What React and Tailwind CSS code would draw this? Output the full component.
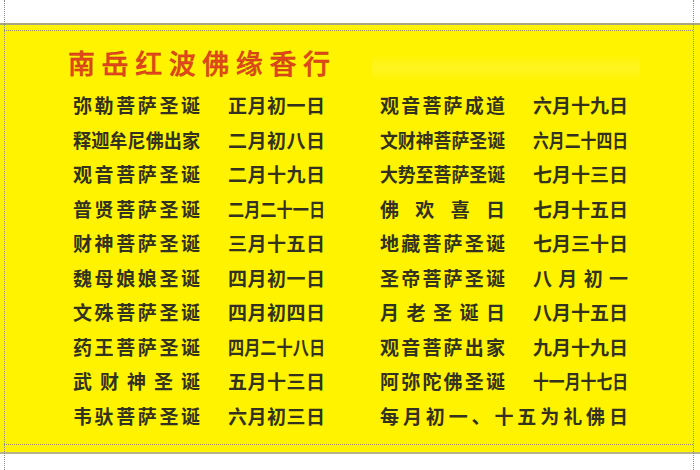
const rows = [
  ["弥勒菩萨圣诞", "正月初一日", "观音菩萨成道", "六月十九日"],
  ["释迦牟尼佛出家", "二月初八日", "文财神菩萨圣诞", "六月二十四日"],
  ["观音菩萨圣诞", "二月十九日", "大势至菩萨圣诞", "七月十三日"],
  ["普贤菩萨圣诞", "二月二十一日", "佛欢喜日", "七月十五日"],
  ["财神菩萨圣诞", "三月十五日", "地藏菩萨圣诞", "七月三十日"],
  ["魏母娘娘圣诞", "四月初一日", "圣帝菩萨圣诞", "八月初一"],
  ["文殊菩萨圣诞", "四月初四日", "月老圣诞日", "八月十五日"],
  ["药王菩萨圣诞", "四月二十八日", "观音菩萨出家", "九月十九日"],
  ["武财神圣诞", "五月十三日", "阿弥陀佛圣诞", "十一月十七日"],
  ["韦驮菩萨圣诞", "六月初三日", "每月初一、十五为礼佛日", null],
];

const FONT = 19;

// spreads the characters over a fixed width, squeezing them when they don't fit
function Spread({ text, width, className = "" }) {
  const chars = Array.from(text);
  const natural = chars.length * FONT;
  const squeeze = natural > width;
  return (
    <div className={`shrink-0 ${className}`} style={{ width }}>
      <div
        className="flex justify-between origin-left"
        style={
          squeeze
            ? { width: natural, transform: `scaleX(${width / natural})` }
            : { width }
        }
      >
        {chars.map((ch, i) => (
          <span key={i}>{ch}</span>
        ))}
      </div>
    </div>
  );
}

export default function App() {
  return (
    <div className="relative w-[700px] h-[470px] overflow-hidden bg-white font-['Noto_Sans_CJK_SC',sans-serif]">
      <div className="h-[23px]" />

      {/* Yellow card */}
      <div className="h-[431px] bg-[#fff300] border-t-2 border-b-2 border-t-[#a8a67a] border-b-[#b7b48c]">
        {/* Title */}
        <div className="flex items-start h-[30px] mt-[23px]">
          <div className="ml-[68px] w-[262px] flex justify-between text-[27px] leading-[30px] font-medium text-[#e5461c] [-webkit-text-stroke:0.4px_#b53814]">
            {Array.from("南岳红波佛缘香行").map((ch, i) => (
              <span key={i}>{ch}</span>
            ))}
          </div>
          <div className="ml-[42px] mt-[7px] w-[268px] h-[25px] rounded-sm bg-gradient-to-b from-[#fff300] via-[#fff41e] to-[#fff300]" />
        </div>

        {/* Rows */}
        <div className="mt-[10px] text-[19px] leading-[24px] font-semibold text-[#33311f]">
          {rows.map((r, i) => (
            <div key={i} className="flex items-center h-[34.5px] pl-[73px]">
              <Spread text={r[0]} width={127} />
              <Spread text={r[1]} width={97} className="ml-[28px]" />
              {r[3] ? (
                <>
                  <Spread text={r[2]} width={125} className="ml-[55px]" />
                  <Spread text={r[3]} width={95} className="ml-[28px]" />
                </>
              ) : (
                <Spread text={r[2]} width={248} className="ml-[55px]" />
              )}
            </div>
          ))}
        </div>
      </div>

      {/* Dotted guide lines */}
      <div className="absolute left-[4px] top-0 h-full border-l border-dotted border-[#8c8c8c]" />
      <div className="absolute left-[693px] top-0 h-full border-l border-dotted border-[#8c8c8c]" />
      <div className="absolute left-[4px] top-[30px] w-[689px] border-t border-dotted border-[#8c8c6c]" />
      <div className="absolute left-[4px] top-[444px] w-[689px] border-t border-dotted border-[#8c8c6c]" />
    </div>
  );
}
